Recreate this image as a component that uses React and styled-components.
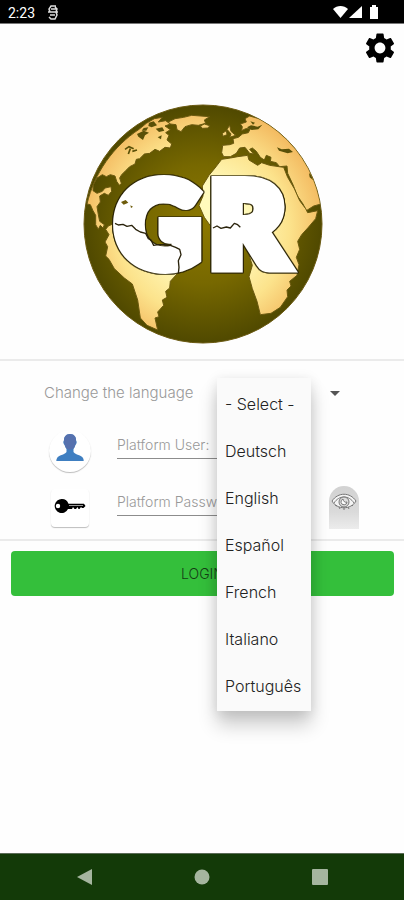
import React from "react";
import styled, { createGlobalStyle } from "styled-components";
import { MdSettings } from "react-icons/md";

const GlobalStyle = createGlobalStyle`
  * { box-sizing: border-box; }
  body { margin: 0; background: #fefefe; font-family: Inter, sans-serif; }
  button, input, select { font: inherit; }
`;

const Screen = styled.div`
  min-height: 100vh;
  display: flex;
  flex-direction: column;
  background: #fefefe;
`;

const StatusBar = styled.header`
  display: flex;
  align-items: center;
  gap: 12px;
  height: 24px;
  padding: 2px 25px 0 8px;
  background: #000;
  border-bottom: 1px solid #777;
  color: #fff;
  font: 14px Roboto, sans-serif;
`;

const StatusIcons = styled.span`
  display: flex;
  gap: 2px;
  margin-left: auto;
`;

const Main = styled.main`
  flex: 1;
  display: flex;
  flex-direction: column;
`;

const Toolbar = styled.div`
  display: flex;
  justify-content: flex-end;
  padding: 6px 6px 0;
`;

const IconButton = styled.button`
  display: flex;
  padding: 0;
  border: 0;
  background: none;
  color: #000;
  cursor: pointer;
`;

const LogoArea = styled.div`
  display: flex;
  justify-content: center;
  padding: 32px 0 6px;
`;

const LogoText = styled.text`
  fill: #fff;
  stroke: #fff;
  stroke-width: 42px;
  stroke-linejoin: miter;
  font: 900 345px Lato, sans-serif;
  filter: drop-shadow(2px 0 0 #2c2505) drop-shadow(-2px 0 0 #2c2505) drop-shadow(0 2px 0 #2c2505) drop-shadow(0 -2px 0 #2c2505);
`;

const LoginForm = styled.form`
  display: flex;
  flex-direction: column;
`;

const Fields = styled.div`
  padding: 12px 45px 3px 44px;
  border-top: 2px solid #ebebeb;
  border-bottom: 2px solid #ebebeb;
`;

const LanguageRow = styled.div`
  display: flex;
  align-items: center;
  gap: 20px;
  height: 40px;
  margin-bottom: 9px;
`;

const LanguageLabel = styled.label`
  color: #999;
  font-size: 15px;
  font-weight: 300;
  line-height: 24px;
  width: 153px;
  white-space: nowrap;
`;

const SelectBox = styled.div`
  position: relative;
  flex: 1;
  display: flex;
  align-items: center;
  padding-right: 19px;
`;

const Select = styled.select`
  flex: 1;
  min-width: 0;
  height: 30px;
  padding: 0 8px;
  border: 0;
  appearance: none;
  background: transparent;
  color: #333;
  font-size: 15px;
  font-weight: 300;
`;

const Menu = styled.ul`
  position: absolute;
  z-index: 2;
  top: 0;
  left: 0;
  width: 94px;
  margin: 0;
  padding: 2px 0;
  list-style: none;
  background: #fafafa;
  box-shadow: 0 14px 18px rgba(0, 0, 0, 0.2), 0 2px 12px rgba(0, 0, 0, 0.1);
`;

const MenuOption = styled.button`
  display: block;
  width: 100%;
  height: 47px;
  padding: 0 8px;
  border: 0;
  background: none;
  color: #222;
  font-size: 16px;
  font-weight: 300;
  text-align: left;
  white-space: nowrap;
  cursor: pointer;
`;

const FieldRow = styled.div`
  display: grid;
  grid-template-columns: 52px 1fr 30px;
  column-gap: 21px;
  align-items: center;
  height: 57px;
`;

const Badge = styled.label`
  display: flex;
  align-items: center;
  justify-content: center;
  justify-self: center;
  width: ${(p) => (p.$round ? 42 : 38)}px;
  height: ${(p) => (p.$round ? 42 : 38)}px;
  padding-bottom: ${(p) => (p.$round ? 5 : 3)}px;
  border-radius: ${(p) => (p.$round ? "50%" : "4px")};
  background: #fff;
  box-shadow: 0 1px 1px rgba(0, 0, 0, 0.26);
`;

const TextInput = styled.input`
  width: 100%;
  min-width: 0;
  height: 29px;
  margin-bottom: 12px;
  padding: 0;
  border: 0;
  border-bottom: 1px solid #8c8c8c;
  border-radius: 0;
  background: transparent;
  color: #333;
  font-size: 14px;
  font-weight: 300;
  outline: 0;
  &::placeholder { color: #999; opacity: 1; }
`;

const RevealButton = styled.button`
  display: flex;
  justify-content: center;
  width: 30px;
  height: 43px;
  padding: 4px 0 0;
  border: 0;
  border-radius: 15px 15px 0 0;
  background: linear-gradient(#d2d2d2, #dadada 60%, #ececec);
  cursor: pointer;
`;

const LoginButton = styled.button`
  height: 45px;
  margin: 10px 10px 0 11px;
  border: 0;
  border-radius: 4px;
  background: #34bf3b;
  color: #143c16;
  font-size: 14px;
  font-weight: 300;
  cursor: pointer;
`;

const NavBar = styled.nav`
  display: flex;
  align-items: center;
  justify-content: space-between;
  height: 47px;
  padding: 0 74px;
  border-top: 1px solid #5b6b57;
  background: #133a08;
  color: #a5b59f;
`;

const LAND = [
  // North America
  "M36 318C58 225 115 145 192 94L214 76 238 62 262 58 250 72 272 68 286 78 270 84 286 95 272 104 282 112 276 126 290 138 286 150 270 148 254 160 240 154 224 166 208 168 194 182 184 184 180 198 164 206 152 218 140 230 134 240 139 256 133 262 125 250 120 234 106 230 94 236 82 230 66 240 55 260 54 278 66 286 82 280 90 270 108 266 110 280 100 292 88 286 74 294 76 312 66 326 70 350 74 370 88 380 84 390 76 382 70 394 62 380 62 352 54 338 46 320Z",
  // Greenland and Iceland
  "M280 72L300 62 326 58 350 52 404 56 388 66 392 76 370 82 350 80 330 86 318 101 306 95 303 80 286 78Z",
  "M376 84L388 78 404 83 400 90 382 91Z",
  // Europe and western Asia
  "M496 78L514 72 510 62 524 54 552 62C650 112 725 210 738 318L716 324 694 338 684 318 666 292 654 260 638 226 636 204 614 206 604 194 586 190 588 178 574 172 568 186 556 178 544 160 532 150 524 154 536 168 524 166 510 148 494 150 484 166 466 176 446 176 440 164 443 142 464 140 476 136 474 122 490 118 502 108 520 104 526 92 512 92 500 98 502 86Z",
  // British Isles
  "M456 94L464 82 468 100 482 112 464 118 468 108Z",
  "M442 106L454 98 456 110 444 115Z",
  // Africa
  "M440 184L466 180 488 176 518 172 522 186 548 202 560 194 584 202 626 208 638 238 658 272 674 308 692 332 698 344 728 338 722 362 700 388 680 410 668 430 674 454 664 478 672 500 666 532 644 550 648 564 636 576 638 596 616 628 588 646 556 650 546 610 532 572 522 536 532 502 516 452 506 400 490 382 480 376 468 386 440 390 408 386 388 358 372 322 384 294 382 264 402 232 420 210Z",
  // South America
  "M100 384L118 376 142 380 170 386 190 400 214 408 236 440 264 440 308 456 312 474 300 500 306 528 286 550 284 570 272 580 276 598 262 606 266 622 248 642 252 656 240 660 248 696 216 682 196 660 188 606 172 558 148 540 118 512 102 484 92 474 98 446 90 432 102 410 92 394Z",
];

const SEAS = [
  "M186 108L206 98 222 104 210 112 204 126 190 116Z",
  "M222 74L236 70 246 82 230 88 220 84Z",
  "M242 92L262 88 268 98 252 102Z",
  "M206 90L220 88 214 98 200 98Z",
  "M248 118L260 112 258 124Z",
  "M516 88L528 82 548 86 562 80 550 94 530 96Z",
  "M606 148L620 154 642 152 654 162 638 166 612 158Z",
  "M526 70L540 74 534 80Z",
  "M702 226L712 232 714 246 704 238Z",
];

function GlobeLogo() {
  return (
    <svg width="255" height="255" viewBox="0 0 765 765" role="img" aria-label="GR">
      <defs>
        <radialGradient id="ocean" gradientUnits="userSpaceOnUse" cx="384" cy="378" r="357">
          <stop offset="0" stopColor="#8c7800" />
          <stop offset="0.5" stopColor="#776800" />
          <stop offset="1" stopColor="#504900" />
        </radialGradient>
        <radialGradient id="land" gradientUnits="userSpaceOnUse" cx="384" cy="390" r="370">
          <stop offset="0.35" stopColor="#fffabc" />
          <stop offset="0.7" stopColor="#fce38c" />
          <stop offset="1" stopColor="#f3b95f" />
        </radialGradient>
        <clipPath id="disc"><circle cx="384" cy="378" r="356" /></clipPath>
      </defs>
      <circle cx="384" cy="378" r="357" fill="url(#ocean)" stroke="#6b5a12" strokeWidth="3" />
      <g clipPath="url(#disc)">
        <g fill="url(#land)" stroke="#6a5910" strokeWidth="3" strokeLinejoin="round">
          {LAND.map((d) => <path key={d} d={d} />)}
        </g>
        <g fill="#5a5008">{SEAS.map((d) => <path key={d} d={d} />)}</g>
        <path d="M150 154l12-8 14 6m-10 0l-6 16m12-8l14-4" fill="none" stroke="#5a5008" strokeWidth="5" />
      </g>
      <LogoText y="504">
        <tspan x="124">G</tspan><tspan x="404">R</tspan>
      </LogoText>
      <g fill="none" stroke="#2a230c" strokeWidth="4" strokeLinejoin="round">
        <path d="M120 376l10 5 14-2 12 6 14-3 12 12 14 8 16 4 8 16 8 4 8 16 14-2 18 0 18 2 16 6 12 6 4 16-8 18 2 20-2 18" />
        <path d="M414 390l12-6 12 7 16-4 12 3 12-14 10 4 8 8" />
      </g>
      <path d="M138 312l14-6 8 8-14 6zM166 322l8 4-6 4z" fill="#6e5c0b" />
    </svg>
  );
}

const UserIcon = () => (
  <svg width="28" height="30" viewBox="0 0 28 30" aria-hidden="true">
    <path d="M14 1c4 0 6 3 6 6 0 1 1 1 .6 3-.3 1-.8 1.500-1.200 2-.5 2-1.400 3-1.900 4v3c2 3 8 3 9.500 6 .6 1 .7 2 .7 3H.3c0-1 .2-2 .8-3 1.500-3 7.400-3 9.400-6v-3c-.5-1-1.400-2-1.900-4-.4-.5-.9-1-1.200-2C7 8 8 8 8 7c0-3 2-6 6-6z" fill="#3f7fc1" />
    <path d="M14 1c4 0 6 3 6 6 0 3-1 7-3 9-2 1-4 1-6 0-2-2-3-6-3-9 0-3 2-6 6-6z" fill="#5671ae" />
  </svg>
);

const KeyIcon = () => (
  <svg width="32" height="16" viewBox="0 0 32 16" aria-hidden="true">
    <path fillRule="evenodd" d="M8 1a7 7 0 0 1 6.500 4.800H30l1.500 2.200-2 2h-1.500l-1-1-1.500 2h-1l-1-2-1.500 2h-1.500l-1.500-2-1 2H14A7 7 0 1 1 8 1zM4 5.800a2.200 2.200 0 1 0 0 4.400 2.200 2.200 0 0 0 0-4.400z" fill="#000" />
    <path d="M15 7.500h14" stroke="#999" />
  </svg>
);

const EyeIcon = () => (
  <svg width="26" height="24" viewBox="0 0 26 24" fill="none" stroke="#777" aria-hidden="true">
    <path d="M1 11C7 2 19 2 25 11c-5 9-19 9-24 0z" fill="#f4f4f4" />
    <path d="M3 13c5-8 15-8 20 0" />
    <circle cx="13" cy="12" r="5" fill="#ddd" />
    <path d="M12 9a3 3 0 1 0 4 3c-2 1-4-1-4-3z" fill="#fff" />
    <path d="M4 15l2 1m2 1l1 2m4-1v2m4-3l1 2m3-4l1 1" />
  </svg>
);

const LANGUAGES = ["- Select -", "Deutsch", "English", "Español", "French", "Italiano", "Português"];

export default function App() {
  const [language, setLanguage] = React.useState(LANGUAGES[0]);
  const [open, setOpen] = React.useState(true);
  const [reveal, setReveal] = React.useState(false);
  const choose = (name) => {
    setLanguage(name);
    setOpen(false);
  };

  return (
    <Screen>
      <GlobalStyle />
      <StatusBar>
        <span>2:23</span>
        <svg width="12" height="16" viewBox="0 0 12 16" fill="none" stroke="#ddd" strokeWidth="1.5" aria-hidden="true">
          <path d="M9 1H4L2 4l1 3h6l1-3-2-2M1 7h10M4 4h5M9 7l1 3-2 4H4l-2-2M3 10h5" />
        </svg>
        <StatusIcons>
          <svg width="34" height="15" viewBox="0 0 34 15" fill="#fff" aria-hidden="true">
            <path d="M0 4C4 0 11 0 15 4L7.500 13z" />
            <path d="M29 1v12H16z" />
          </svg>
          <svg width="10" height="15" viewBox="0 0 10 15" fill="#fff" aria-hidden="true">
            <path d="M3 0h4v2h2v12H1V2h2z" />
          </svg>
        </StatusIcons>
      </StatusBar>
      <Main>
        <Toolbar>
          <IconButton type="button" aria-label="Settings"><MdSettings size={36} /></IconButton>
        </Toolbar>
        <LogoArea><GlobeLogo /></LogoArea>
        <LoginForm onSubmit={(e) => e.preventDefault()}>
          <Fields>
            <LanguageRow>
              <LanguageLabel htmlFor="language">Change the language</LanguageLabel>
              <SelectBox>
                <Select
                  id="language"
                  value={language}
                  onChange={(e) => choose(e.target.value)}
                >
                  {LANGUAGES.map((name) => <option key={name}>{name}</option>)}
                </Select>
                <svg width="10" height="5" viewBox="0 0 10 5" aria-hidden="true"><path d="M0 0h10L5 5z" fill="#555" /></svg>
                {open && (
                  <Menu aria-label="Languages">
                    {LANGUAGES.map((name) => (
                      <li key={name}>
                        <MenuOption type="button" onClick={() => choose(name)}>{name}</MenuOption>
                      </li>
                    ))}
                  </Menu>
                )}
              </SelectBox>
            </LanguageRow>
            <FieldRow>
              <Badge htmlFor="user" aria-label="Platform User" $round><UserIcon /></Badge>
              <TextInput id="user" placeholder="Platform User:" />
            </FieldRow>
            <FieldRow>
              <Badge htmlFor="password" aria-label="Platform Password"><KeyIcon /></Badge>
              <TextInput id="password" type={reveal ? "text" : "password"} placeholder="Platform Password:" />
              <RevealButton type="button" aria-label="Show password" onClick={() => setReveal(!reveal)}>
                <EyeIcon />
              </RevealButton>
            </FieldRow>
          </Fields>
          <LoginButton type="submit">LOGIN</LoginButton>
        </LoginForm>
      </Main>
      <NavBar aria-label="System">
        <IconButton type="button" aria-label="Back">
          <svg width="20" height="20" viewBox="0 0 20 20"><path d="M3 10L18 2v16z" fill="#a5b59f" /></svg>
        </IconButton>
        <IconButton type="button" aria-label="Home">
          <svg width="20" height="20" viewBox="0 0 20 20"><circle cx="10" cy="10" r="7.500" fill="#a5b59f" /></svg>
        </IconButton>
        <IconButton type="button" aria-label="Recent apps">
          <svg width="20" height="20" viewBox="0 0 20 20"><rect x="2" y="2" width="16" height="16" rx="1" fill="#a5b59f" /></svg>
        </IconButton>
      </NavBar>
    </Screen>
  );
}
